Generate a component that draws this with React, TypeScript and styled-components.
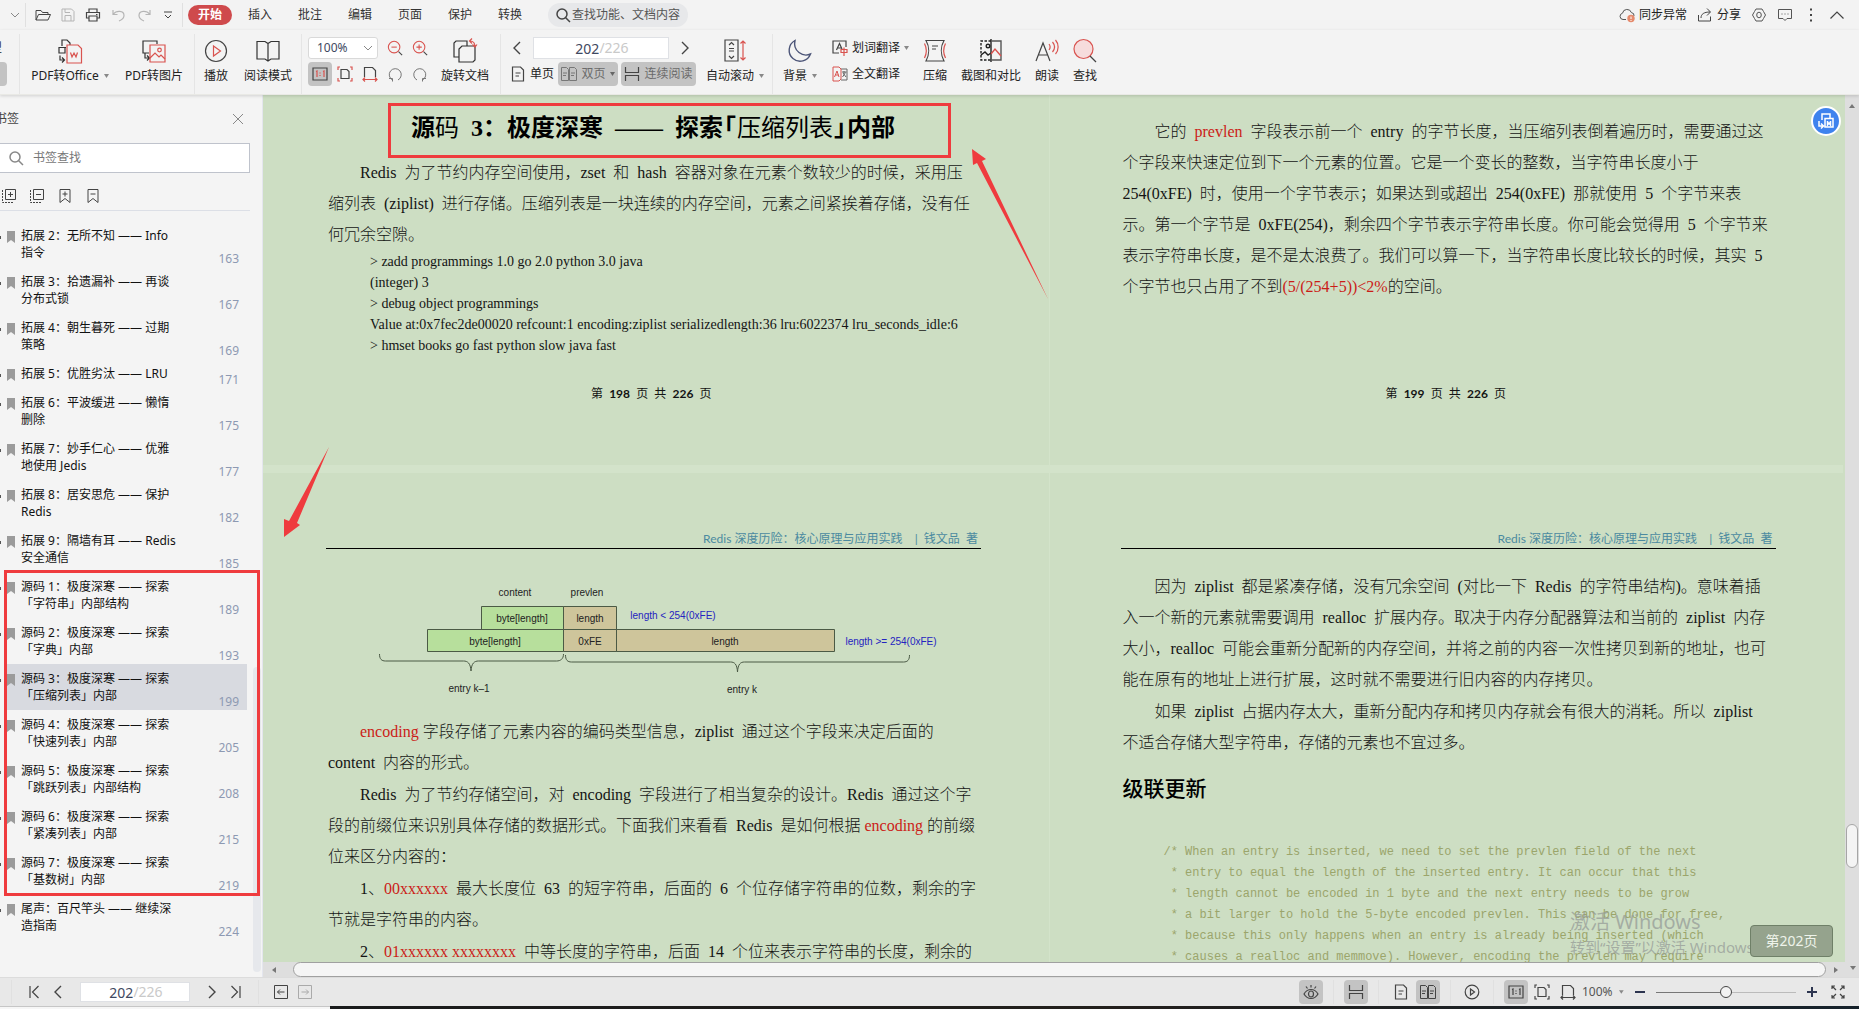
import React from "react";
import styled, { createGlobalStyle } from "styled-components";

const UI_FONT = '"Noto Sans", "Noto Sans CJK SC", sans-serif';
const HEAD_FONT = 'Lato, "Noto Sans CJK SC", sans-serif';
const DOC_FONT = '"Liberation Serif", "Noto Sans CJK SC", serif';
const PAPER = "#cddec3";
const RED = "#ef3b3e";
const ICON_RED = "#d9534f";

const Global = createGlobalStyle`
  * { box-sizing: border-box; }
  html, body { margin: 0; padding: 0; height: 100%; overflow: hidden; }
  body { font: 12px/16px ${UI_FONT}; color: #222; background: #f3f3f3; }
  button, input, select { font: inherit; color: inherit; }
  h1, h2, p, ul, figure, pre { margin: 0; padding: 0; }
`;

/* ---------- icons ---------- */

type IconProps = { size?: number; children: React.ReactNode; color?: string; w?: number };
const Icon = ({ size = 16, w = 1, color = "#444", children }: IconProps) => (
  <svg width={size} height={size} viewBox={`0 0 ${size} ${size}`} fill="none" stroke={color} strokeWidth={w} aria-hidden="true">
    {children}
  </svg>
);

const ChevronLeft = () => <Icon w={1.4}><path d="M11 2L5 8l6 6" /></Icon>;
const ChevronRight = () => <Icon w={1.4}><path d="M5 2l6 6-6 6" /></Icon>;
const ChevronDown = ({ color = "#888" }: { color?: string }) => (
  <Icon size={10} color={color}><path d="M1 3l4 4 4-4" /></Icon>
);
const Caret = ({ color = "#888" }: { color?: string }) => (
  <svg width="5" height="4" viewBox="0 0 5 4" aria-hidden="true"><path d="M0 0h5L2.5 4z" fill={color} /></svg>
);
const FolderIcon = () => <Icon><path d="M1 13V3.500h5l1.500 2H13V7.500M1 13l2.500-5.500H15.500L13 13z" /></Icon>;
const SaveIcon = () => <Icon color="#b5b5b5"><path d="M2 14V2h9.500L14 4.500V14zM5 2v3.500h5M5 14V8.500h6V14" /></Icon>;
const PrintIcon = () => (
  <Icon w={1.2}><path d="M4 5V2h8v3M4 11H1.500V5.500h13V11H12M4 9h8v5H4zM11 7.500h1.500" /></Icon>
);
const UndoIcon = () => <Icon color="#b5b5b5" w={1.2}><path d="M2 3v4.500h4.500M2.500 7C5 3.500 13 3 13 8.500c0 3-2.500 4.500-5 5.500" /></Icon>;
const RedoIcon = () => <Icon color="#b5b5b5" w={1.2}><path d="M14 3v4.500H9.500M13.500 7C11 3.500 3 3 3 8.500c0 3 2.500 4.500 5 5.500" /></Icon>;
const MoreDownIcon = () => <Icon size={10}><path d="M1 2h8M2 5l3 3 3-3" /></Icon>;
const SearchIcon = ({ color = "#444" }: { color?: string }) => (
  <Icon color={color} w={1.5}><circle cx="7" cy="7" r="5" /><path d="M10.500 10.500l4.500 4.500" /></Icon>
);
const CloudIcon = () => (
  <Icon color="#555"><path d="M7 12.500H4a3.200 3.200 0 01-.5-6.300A4.600 4.600 0 0112.400 5.600 3 3 0 0115 9" /><circle cx="12" cy="11.500" r="3.700" fill="#e58a6c" stroke="none" /><path d="M12 9.500v2.500M12 13v1" stroke="#fff" /></Icon>
);
const ShareIcon = () => <Icon><path d="M1.500 8v6h12V9.500M4 11c0-4 3-6 9-6M10 1.500L13.500 5 10 8.500" /></Icon>;
const HexIcon = () => (
  <Icon color="#555"><path d="M5 2h6l1.500 2.500L14.500 8l-2 3.500L11 14H5l-1.500-2.500L1.500 8l2-3.500z" /><ellipse cx="8" cy="8" rx="2.300" ry="2.800" /></Icon>
);
const CommentIcon = () => <Icon color="#555"><path d="M1.500 2.500h13v9H10l-2 2-2-2H1.500z" /><path d="M4.500 7h1M7.500 7h1M10.500 7h1" /></Icon>;
const DotsIcon = () => <Icon><path d="M7 2.500h2M7 8h2M7 13.500h2" strokeWidth="2" /></Icon>;
const CollapseIcon = () => <Icon w={1.2}><path d="M1.500 11.500L8 5l6.500 6.500" /></Icon>;
const CloseIcon = () => <Icon size={12} color="#888"><path d="M1 1l10 10M11 1L1 11" /></Icon>;

const PdfOfficeIcon = () => (
  <Icon size={26} color="#333" w={1.2}>
    <path d="M5 8V2h5l3 3v2M9 9.500H2v5.500h6V9.500M3 17.500V22h4.500M5 19.500L7.500 22 5 24.500" />
    <path d="M10 7h11l3.500 3.500V25H10z" stroke={ICON_RED} /><path d="M13.500 14.500l1.500 4.500 2-4 2 4 1.500-4.500" stroke={ICON_RED} />
  </Icon>
);
const PdfImageIcon = () => (
  <Icon size={26} color="#333" w={1.2}>
    <path d="M8 15H2V3h14v3M4 15v5h4M6 17.500L8.500 20 6 22.500" />
    <path d="M9 7h15v17H9z" stroke={ICON_RED} /><path d="M9 20l5-5 4 4 2-2 4 4" stroke={ICON_RED} /><circle cx="18.500" cy="12" r="1.800" stroke={ICON_RED} />
  </Icon>
);
const PlayIcon = () => (
  <Icon size={26} color="#444" w={1.2}><circle cx="13" cy="13" r="10.500" /><path d="M10.500 8l7 5-7 5z" stroke={ICON_RED} /></Icon>
);
const BookIcon = () => (
  <Icon size={26} color="#333" w={1.2}><path d="M2 3.500h8l3 2 3-2h8V21h-8l-3 2-3-2H2zM13 5.500V23" /></Icon>
);
const ZoomGlass = ({ plus }: { plus?: boolean }) => (
  <Icon size={18} color={ICON_RED} w={1.2}><circle cx="8" cy="8" r="6.500" /><path d={plus ? "M5 8h6M8 5v6" : "M5 8h6"} /><path d="M13 13l4 4" stroke="#444" /></Icon>
);
const OneToOneIcon = ({ color = "#444" }: { color?: string }) => (
  <Icon w={1.2}><path d="M1 2h14v12H1z" /><path d="M4 5.500l1-.5v6M11 5.500l1-.5v6M8 6.500v1M8 9v1" stroke={color} /></Icon>
);
const FitPageIcon = ({ color = "#444" }: { color?: string }) => (
  <Icon w={1.2}><path d="M4 3.500h6l2 2v7H4z" /><path d="M1 4V1h2M13 1h2v3M1 12v3h2M15 12v3h-2" stroke={color} /></Icon>
);
const FitWidthIcon = ({ color = "#444" }: { color?: string }) => (
  <Icon w={1.2}><path d="M2.500 11V1.500h8l3 3V11" /><path d="M1 13.500h14M3 11.500l-2 2 2 2M13 11.500l2 2-2 2" stroke={color} /></Icon>
);
const RotateLeftIcon = () => <Icon color="#777"><path d="M5.500 14A6 6 0 1111 14M2 12.500h3.500V15.500" /></Icon>;
const RotateRightIcon = () => <Icon color="#777"><path d="M10.500 14A6 6 0 105 14M14 12.500h-3.500V15.500" /></Icon>;
const RotateDocIcon = () => (
  <Icon size={26} color="#333" w={1.2}>
    <path d="M7 19H2V5l2-2h11v5" /><path d="M7 11l3-3h13v14l-2 2H7z" />
    <path d="M18 3c4 0 5 2 5 6M20 .5L17.500 3 20 5.500M20.500 6.500L23 9l2-2.500" stroke={ICON_RED} />
  </Icon>
);
const PageIcon = () => <Icon w={1.2}><path d="M2.500 1h8l3 3v11h-11zM5.500 7h5M5.500 10h3.500" /></Icon>;
const TwoPageIcon = ({ color = "#444" }: { color?: string }) => (
  <Icon color={color}><path d="M.5 1.500h5l2 2v11h-7zM8.500 1.500h5l2 2v11h-7zM2 7h4M2 9.500h3M10 7h4M10 9.500h3" /></Icon>
);
const ContinuousIcon = () => <Icon w={1.2}><path d="M1.500 1v5.500h13V1M1.500 15V9.500h13V15" /></Icon>;
const ScrollIcon = () => (
  <Icon size={26} color="#444" w={1.2}><path d="M3 2h13v21H3zM7 7l2.500-2.500L12 7M7 18l2.500 2.500L12 18M7 10.500h5M7 13h5" /><path d="M21 3v19M18.500 5.500L21 3l2.500 2.500M18.500 19.500L21 22l2.500-2.500" stroke={ICON_RED} /></Icon>
);
const MoonIcon = () => <Icon size={26} color="#4c5578" w={1.4}><path d="M8 2.500A11 11 0 1023.500 16C16 19.500 5.500 13 8 2.500z" /></Icon>;
const WordTranslateIcon = () => (
  <Icon w={1.2}><path d="M7 13H1V1h13v6M4.500 10L7.500 3.500 10 9M5.500 8h4" /><path d="M9 9.500h6v3H9zM12 7.500V16" stroke={ICON_RED} /></Icon>
);
const FullTranslateIcon = () => (
  <Icon><path d="M9 3h6v11H9M10 6h4.500M12 5v2M10.500 11l3-4.500M14 11l-3-4" stroke="#666" /><path d="M9 3L7 1H1v14h6l2-2zM2.500 11l2.500-6 2 6M3.500 9h3" stroke={ICON_RED} /></Icon>
);
const CompressIcon = () => (
  <Icon size={26} color="#444" w={1.2}><path d="M4 2.500h18c-3.500 6-3.500 14 0 20.500H4c3.500-6.500 3.500-14.500 0-20.500zM10 8h6M10 11h4" /><path d="M2.500 5.500c2.500 5 2.500 9.500 0 14.500M23.500 5.500c-2.500 5-2.500 9.500 0 14.500" stroke={ICON_RED} /></Icon>
);
const CompareIcon = () => (
  <Icon size={26} color="#222" w={1.4}><path d="M13 3H3v19h10" strokeDasharray="2.500 1.500" /><path d="M13 1v23" /><path d="M13 3h10v19H13" stroke="#555" /><path d="M3 17l4-3 3 3 3-2" /><path d="M13 16l4-5 6 7" stroke={ICON_RED} /><circle cx="10" cy="8" r="1.800" /></Icon>
);
const ReadAloudIcon = () => (
  <Icon size={26} color="#444" w={1.2}><path d="M2 23L9 5l7 18M4.500 17h9" /><path d="M15 6c1.500 2 1.500 4 0 6M18.500 4c2.500 3 2.500 7 0 10M21.500 2c3.500 4 3.500 10 0 14" stroke={ICON_RED} /></Icon>
);
const FindIcon = () => (
  <Icon size={26} color={ICON_RED} w={1.2}><circle cx="11.500" cy="11" r="9.500" fill="#f6dcdc" /><path d="M18 18l6 6" stroke="#444" /></Icon>
);
const ExpandAllIcon = ({ minus }: { minus?: boolean }) => (
  <Icon><path d="M4.500 1.500h10v10h-10zM7 6.500h5" />{!minus && <path d="M9.500 4v5" />}<path d="M1.500 2v12.500H13" strokeDasharray="2 1" /></Icon>
);
const BookmarkEditIcon = ({ minus }: { minus?: boolean }) => (
  <Icon><path d="M3 1.500h10v13l-5-4-5 4zM5.500 6h5" />{!minus && <path d="M8 3.500v5" />}</Icon>
);
const BookmarkIcon = () => (
  <svg width="8" height="12" viewBox="0 0 8 12" aria-hidden="true"><path d="M0 0h8v12L4 9l-4 3z" fill="#9b9b9b" /></svg>
);
const FirstIcon = () => <Icon w={1.2}><path d="M4 2v12M12.500 2l-6 6 6 6" /></Icon>;
const LastIcon = () => <Icon w={1.2}><path d="M12 2v12M3.500 2l6 6-6 6" /></Icon>;
const BoxArrowIcon = ({ right }: { right?: boolean }) => (
  <Icon color={right ? "#aaa" : "#444"}><path d="M1.500 1.500h13v13h-13z" /><path d={right ? "M4.500 8h7M9 5.500L11.500 8 9 10.500" : "M4.500 8h7M7 5.500L4.500 8 7 10.500"} /></Icon>
);
const EyeIcon = () => (
  <Icon size={18} w={1.2}><path d="M2 11c3.500-6 10.500-6 14 0-3.500 6-10.500 6-14 0z" /><ellipse cx="9" cy="11" rx="2.500" ry="3" /><path d="M9 2v2.500M4 3.500l1.500 2M14 3.500l-1.500 2" /></Icon>
);
const SmallPlayIcon = () => <Icon w={1.2}><circle cx="8" cy="8" r="6.800" /><path d="M6.500 5l4 3-4 3z" /></Icon>;
const FullscreenIcon = () => (
  <Icon w={1.2}><path d="M2 5V2h3M2 2l4 4M11 2h3v3M14 2l-4 4M2 11v3h3M2 14l4-4M14 11v3h-3M14 14l-4-4" /></Icon>
);
const FloatIcon = () => (
  <Icon size={18} color="#fff" w={1.5}><path d="M5 8V2h8v4M2 9v5h4M4 11.500L6.500 14 4 16.500M8 6.500h8V15H8z" /><path d="M10.500 9v4l1.500-2 1.500 2V9" /></Icon>
);

/* ---------- shell ---------- */

const Shell = styled.div`
  height: 100vh; display: flex; flex-direction: column; overflow: hidden; background: #f3f3f3;
`;
const Plain = styled.button`
  border: 0; background: none; padding: 0; display: flex; align-items: center; justify-content: center; cursor: pointer; white-space: nowrap;
`;
const IconButton = styled(Plain)<{ $w?: number }>`
  width: ${(p) => p.$w ?? 24}px; height: 24px; flex: none;
`;
const Rule = styled.span`
  width: 1px; height: 24px; background: #e0e0e0; flex: none;
`;

const MenuBar = styled.header`
  height: 30px; flex: none; display: flex; align-items: center;
`;
const Quick = styled.div`
  display: flex; align-items: center; width: 182px; padding-left: 4px; flex: none;
`;
const Tabs = styled.nav`
  display: flex; align-items: center; gap: 6px; padding-left: 5px;
`;
const Tab = styled(Plain)<{ $active?: boolean }>`
  width: 44px; height: 20px; border-radius: 10px;
  background: ${(p) => (p.$active ? "#cf4a4c" : "transparent")};
  color: ${(p) => (p.$active ? "#fff" : "#333")};
  font-weight: ${(p) => (p.$active ? 700 : 400)};
`;
const CommandSearch = styled.label`
  display: flex; align-items: center; width: 140px; height: 24px; margin-left: 16px; padding-left: 7px;
  border-radius: 12px; background: #e7e8ea;
  input { border: 0; background: none; outline: 0; padding: 0; width: 112px; margin-left: 1px; }
  input::placeholder { color: #555; opacity: 1; }
`;
const MenuRight = styled.div`
  display: flex; align-items: center; margin-left: auto; padding-right: 4px;
`;
const TextAction = styled(Plain)`
  gap: 4px; margin-right: 10px; color: #222;
`;

const Ribbon = styled.div`
  height: 65px; flex: none; display: flex; align-items: flex-start; padding-top: 4px;
  border-bottom: 1px solid #e9e9e5; box-shadow: 0 1px 3px rgba(0, 0, 0, 0.15); position: relative; z-index: 2; background: #f3f3f3;
`;
const Group = styled.div<{ $gap?: number; $pad?: number; $end?: number }>`
  display: flex; gap: ${(p) => p.$gap ?? 16}px; height: 60px; border-right: 1px solid #e5e5e5;
  padding: 0 ${(p) => p.$end ?? p.$pad ?? 10}px 0 ${(p) => p.$pad ?? 10}px;
  &:last-child { border-right: 0; }
`;
const Big = styled(Plain)<{ $w: number }>`
  width: ${(p) => p.$w}px; height: 54px; flex-direction: column; justify-content: flex-start; padding-top: 4px; gap: 4px; color: #222;
  span { display: flex; align-items: center; gap: 5px; height: 16px; }
`;
const Stack = styled.div`
  display: flex; flex-direction: column; gap: 2px; padding-top: 2px;
`;
const Line = styled.div<{ $gap?: number }>`
  display: flex; align-items: center; height: 24px; gap: ${(p) => p.$gap ?? 0}px;
`;
const Small = styled(Plain)<{ $w?: number; $on?: boolean; $dim?: boolean }>`
  ${(p) => (p.$w ? `width: ${p.$w}px;` : "")}
  height: 24px; gap: 4px; border-radius: 4px;
  background: ${(p) => (p.$on ? "#c3c3c3" : "transparent")};
  color: ${(p) => (p.$dim ? "#6b6b6b" : "#222")};
`;
const SelectBox = styled.label<{ $w: number; $plain?: boolean }>`
  position: relative; display: flex; align-items: center; justify-content: space-between; width: ${(p) => p.$w}px; height: 22px;
  padding: 0 ${(p) => (p.$plain ? 0 : 4)}px 0 ${(p) => (p.$plain ? 0 : 8)}px;
  border: ${(p) => (p.$plain ? 0 : "1px solid #d9d9d9")}; border-radius: 3px;
  background: ${(p) => (p.$plain ? "none" : "#fff")}; color: ${(p) => (p.$plain ? "#555" : "#3e4861")};
  select { appearance: none; border: 0; background: none; padding: 0; width: 40px; outline: 0; font-size: 12px; }
`;
const PageBox = styled.label<{ $w: number; $h: number }>`
  display: flex; align-items: center; justify-content: center; width: ${(p) => p.$w}px; height: ${(p) => p.$h}px;
  background: #fff; border: 1px solid #dfe1e5; font-size: 14px; color: #c9c9c9;
  input { width: 26px; border: 0; padding: 0; text-align: right; background: none; color: #3e4861; outline: 0; height: 18px; }
`;
const CutStub = styled.div`
  width: 20px; height: 60px; display: flex; flex-direction: column; gap: 2px; padding-top: 2px; border-right: 1px solid #e5e5e5; margin-right: 1px; overflow: hidden; flex: none;
  span { height: 24px; line-height: 24px; margin-left: -10px; }
  i { height: 24px; width: 7px; border-radius: 0 4px 4px 0; background: #c3c3c3; }
`;

/* ---------- sidebar ---------- */

const Middle = styled.div`
  flex: 1; min-height: 0; display: flex;
`;
const Side = styled.aside`
  width: 263px; flex: none; position: relative; border-right: 1px solid #e4e6ee; overflow: hidden; background: #f4f4f4;
`;
const SideHead = styled.div`
  display: flex; align-items: center; justify-content: space-between; height: 48px; padding-right: 18px; color: #444;
  span { margin-left: -5px; }
`;
const SideSearch = styled.label`
  display: flex; align-items: center; height: 30px; width: 251px; margin-left: -1px; padding-left: 8px; gap: 9px;
  background: #fff; border: 1px solid #bfc3cc;
  input { border: 0; outline: 0; padding: 0; background: none; width: 180px; }
  input::placeholder { color: #777; opacity: 1; }
`;
const SideTools = styled.div`
  display: flex; align-items: center; gap: 12px; height: 38px; width: 250px; padding: 8px 0 0 1px; border-bottom: 1px solid #dcdfe6;
`;
const SideTool = styled(Plain)`
  width: 16px; height: 16px;
`;
const List = styled.ul`
  list-style: none; padding-top: 10px;
`;
const Entry = styled.button<{ $on?: boolean }>`
  display: flex; width: 247px; border: 0; padding: 0 8px 0 0; background: ${(p) => (p.$on ? "linear-gradient(90deg, transparent 7px, #d8dae0 7px)" : "none")};
  text-align: left; line-height: 17px; color: #111; align-items: flex-start;
`;
const EntryDot = styled.i`
  width: 1px; height: 3px; background: #555; margin: 15px 6px 0 0;
`;
const EntryMark = styled.span`
  width: 14px; padding-top: 10px; display: flex;
`;
const EntryText = styled.span`
  flex: 1; white-space: pre; padding: 6px 0;
`;
const EntryPage = styled.span`
  align-self: flex-end; color: #8d99b2;
`;
const SideScroll = styled.div`
  position: absolute; right: 1px; top: 572px; bottom: 5px; width: 8px; border-radius: 4px; background: #e6e8ec;
`;
const SideMarker = styled.div`
  position: absolute; left: 4px; top: 475px; width: 256px; height: 326px; border: 3px solid ${RED}; pointer-events: none;
`;

/* ---------- document ---------- */

const View = styled.main`
  flex: 1; min-width: 0; display: grid; grid-template-columns: 1fr 14px; grid-template-rows: 1fr 15px; position: relative; background: #dedede;
`;
const Canvas = styled.div`
  overflow: hidden; position: relative; background: ${PAPER}; min-height: 0;
`;
const Spread = styled.div`
  display: grid; grid-template-columns: 1fr 1fr; grid-template-rows: 370px 520px; gap: 8px 1px; margin: 0 2px 0 -8px; background: #d3e3ca;
`;
const Paper = styled.article<{ $top: number }>`
  background: ${PAPER}; padding: ${(p) => p.$top}px 0 62px 71px; display: flex; flex-direction: column; min-width: 0; overflow: hidden;
  font-family: ${DOC_FONT}; color: #141414;
`;
const Title = styled.h1`
  position: relative; align-self: flex-start; font-size: 24px; line-height: 32px; margin: 0 0 13px 85px; white-space: pre; color: #000;
  span { font-weight: 400; }
  em { font-style: normal; font-feature-settings: "halt"; padding: 0 1px; }
`;
const TitleMarker = styled.div`
  position: absolute; left: -23px; top: -9px; width: 563px; height: 55px; border: 3px solid ${RED};
`;
const Para = styled.p`
  padding-left: 2px;
  & + & { margin-top: 1px; }
`;
const Row = styled.span`
  display: block; font-size: 16px; line-height: 31px; font-weight: 300; white-space: pre;
  &:first-child { padding-left: 32px; }
`;
const Mark = styled.b`
  font-weight: 400; color: #cb1c17;
`;
const Console = styled.pre`
  font: 14px/21px ${DOC_FONT}; padding-left: 44px; margin-top: 1px;
`;
const Comment = styled.pre`
  font: 12px/21px "Liberation Mono", monospace; padding-left: 43px; margin-top: 39px; color: #9ba56b;
`;
const Heading = styled.h2`
  font: 500 21px/32px "Noto Sans CJK SC", sans-serif; margin: 13px 0 0 2px; color: #000;
`;
const Running = styled.div<{ $after: number }>`
  width: 655px; margin-bottom: ${(p) => p.$after}px; padding-right: 3px; border-bottom: 1px solid #000; text-align: right; font: 12px/18px ${HEAD_FONT}; color: #4b8aa0; white-space: pre;
`;
const Footer = styled.footer`
  margin: auto 0 0 0; padding-right: 72px; text-align: center; font: 12px/18px ${HEAD_FONT}; white-space: pre;
`;
const Figure = styled.figure`
  height: 120px; margin: 0 0 16px 2px;
  text { font: 10px "Liberation Sans", Arial, sans-serif; text-anchor: middle; }
`;
const VScroll = styled.div`
  position: relative; display: flex; flex-direction: column; align-items: center; padding: 9px 0 0; background: #dedede;
`;
const VThumb = styled.div`
  position: absolute; top: 729px; left: 1px; right: 1px; height: 44px; border: 1px solid #a6a6a6; border-radius: 7px; background: #f4f4f4;
`;
const HScroll = styled.div`
  display: flex; align-items: center; padding: 0 7px 0 9px; gap: 8px;
`;
const HThumb = styled.div`
  flex: 1; height: 15px; border: 1px solid #a0a0a0; border-radius: 8px; background: #f5f5f5; margin-left: 9px;
`;
const FloatButton = styled(Plain)`
  position: absolute; right: 4px; top: 11px; width: 30px; height: 30px; border-radius: 50%; border: 2px solid #fff; background: #3f83ee;
`;
const Watermark = styled.div`
  position: absolute; right: 63px; bottom: 4px; width: 212px; color: rgba(150, 156, 152, 0.75); white-space: nowrap;
  font: 15px/22px ${UI_FONT};
  strong { display: block; font-weight: 400; font-size: 20px; line-height: 28px; }
`;
const PageTip = styled.div`
  position: absolute; right: 12px; bottom: 5px; width: 83px; height: 32px; border: 1px solid #6f8068; border-radius: 4px; background: #95a38d;
  color: #eef3ea; font: 14px/30px ${UI_FONT}; text-align: center;
`;
const Arrows = styled.svg`
  position: absolute; left: 0; top: 0; pointer-events: none;
`;

/* ---------- status bar ---------- */

const Status = styled.footer`
  height: 29px; flex: none; display: flex; align-items: center; background: #e8e8e8; border-top: 1px solid #dcdcdc;
`;
const StatusLeft = styled.div`
  display: flex; align-items: center; padding-left: 11px; gap: 10px;
`;
const StatusRight = styled.div`
  display: flex; align-items: center; margin-left: auto; padding-right: 11px; gap: 10px;
`;
const Range = styled.input`
  appearance: none; width: 140px; height: 14px; margin: 0; background: linear-gradient(#777, #777) left center / 50% 1px no-repeat, linear-gradient(#bbb, #bbb) center / 100% 1px no-repeat;
  &::-webkit-slider-thumb { appearance: none; width: 12px; height: 12px; border-radius: 50%; border: 1px solid #444; background: #f3f3f3; }
`;
const Sign = styled(Plain)`
  width: 12px; height: 20px;
`;
const Desktop = styled.div`
  height: 3px; flex: none; display: grid; grid-template-columns: 330px 1fr; background: linear-gradient(90deg, #16191c, #23201d 60%, #16222b);
  i { background: #f6f6f6; border-top: 1px solid #c6c6c6; }
`;

/* A paragraph with fixed line breaks; words between tildes are set in red. */
const Text = ({ lines }: { lines: string[] }) => (
  <Para>
    {lines.map((line) => (
      <Row key={line}>
        {line.split("~").map((part, i) => (i % 2 ? <Mark key={i}>{part}</Mark> : part))}
      </Row>
    ))}
  </Para>
);

const bookmarks: { text: string; page: number; on?: boolean }[] = [
  { text: "拓展 2：无所不知 —— Info\n指令", page: 163 },
  { text: "拓展 3：拾遗漏补 —— 再谈\n分布式锁", page: 167 },
  { text: "拓展 4：朝生暮死 —— 过期\n策略", page: 169 },
  { text: "拓展 5：优胜劣汰 —— LRU", page: 171 },
  { text: "拓展 6：平波缓进 —— 懒惰\n删除", page: 175 },
  { text: "拓展 7：妙手仁心 —— 优雅\n地使用 Jedis", page: 177 },
  { text: "拓展 8：居安思危 —— 保护\nRedis", page: 182 },
  { text: "拓展 9：隔墙有耳 —— Redis\n安全通信", page: 185 },
  { text: "源码 1：极度深寒 —— 探索\n「字符串」内部结构", page: 189 },
  { text: "源码 2：极度深寒 —— 探索\n「字典」内部", page: 193 },
  { text: "源码 3：极度深寒 —— 探索\n「压缩列表」内部", page: 199, on: true },
  { text: "源码 4：极度深寒 —— 探索\n「快速列表」内部", page: 205 },
  { text: "源码 5：极度深寒 —— 探索\n「跳跃列表」内部结构", page: 208 },
  { text: "源码 6：极度深寒 —— 探索\n「紧凑列表」内部", page: 215 },
  { text: "源码 7：极度深寒 —— 探索\n「基数树」内部", page: 219 },
  { text: "尾声：百尺竿头 —— 继续深\n造指南", page: 224 },
];

const tabs = ["开始", "插入", "批注", "编辑", "页面", "保护", "转换"];

const runningText = "Redis 深度历险：核心原理与应用实践    |  钱文品  著";

const ZiplistFigure = () => (
  <svg width="653" height="120" viewBox="0 0 653 120" fill="none" stroke="#4b5a45" role="img" aria-label="ziplist entry">
    <path d="M153.500 26.500h82v23h-82zM99.500 49.500h136v22h-136z" fill="#b7df9c" />
    <path d="M235.500 26.500h53v23h-53zM235.500 49.500h53v22h-53zM288.500 49.500h218v22h-218z" fill="#cec59b" />
    <path d="M51.500 74c0 5 2 7 6 7h78c4 0 7 2 7.500 10 .5-8 3.500-10 7.500-10h78c4 0 7-2 7-7M237.500 75c0 5 2 7 6 7h159c4 0 6.500 2 7 10 .5-8 3-10 7-10h159c4 0 6-2 6-7" />
    <g stroke="none" fill="#222">
      <text x="187" y="16">content</text>
      <text x="259" y="16">prevlen</text>
      <text x="194" y="42">byte[length]</text>
      <text x="262" y="42">length</text>
      <text x="167" y="65">byte[length]</text>
      <text x="262" y="65">0xFE</text>
      <text x="397" y="65">length</text>
      <text x="141" y="112">entry k–1</text>
      <text x="414" y="113">entry k</text>
    </g>
    <g stroke="none" fill="#2424c0">
      <text x="345" y="39">length &lt; 254(0xFE)</text>
      <text x="563" y="65">length &gt;= 254(0xFE)</text>
    </g>
  </svg>
);

export default function App() {
  return (
    <Shell>
      <Global />
      <MenuBar>
        <Quick>
          <IconButton $w={21} aria-label="菜单"><ChevronDown /></IconButton>
          <Rule />
          <IconButton $w={34} aria-label="打开"><FolderIcon /></IconButton>
          <IconButton $w={16} aria-label="保存"><SaveIcon /></IconButton>
          <IconButton $w={34} aria-label="打印"><PrintIcon /></IconButton>
          <IconButton $w={17} aria-label="撤销"><UndoIcon /></IconButton>
          <IconButton $w={34} aria-label="恢复"><RedoIcon /></IconButton>
          <IconButton $w={14} aria-label="更多"><MoreDownIcon /></IconButton>
        </Quick>
        <Rule />
        <Tabs>
          {tabs.map((t, i) => <Tab key={t} $active={i === 0}>{t}</Tab>)}
        </Tabs>
        <CommandSearch>
          <SearchIcon />
          <input aria-label="查找功能" placeholder="查找功能、文档内容" />
        </CommandSearch>
        <MenuRight>
          <TextAction><CloudIcon />同步异常</TextAction>
          <TextAction><ShareIcon />分享</TextAction>
          <IconButton $w={16} aria-label="设置"><HexIcon /></IconButton>
          <IconButton $w={36} aria-label="反馈"><CommentIcon /></IconButton>
          <IconButton $w={16} aria-label="更多选项"><DotsIcon /></IconButton>
          <IconButton $w={36} aria-label="收起"><CollapseIcon /></IconButton>
        </MenuRight>
      </MenuBar>

      <Ribbon>
        <CutStub aria-hidden="true"><span>型</span><i /></CutStub>
        <Group $gap={15}>
          <Big $w={78}><PdfOfficeIcon /><span>PDF转Office <Caret /></span></Big>
          <Big $w={60}><PdfImageIcon /><span>PDF转图片</span></Big>
        </Group>
        <Group $gap={16} $pad={9}>
          <Big $w={24}><PlayIcon /><span>播放</span></Big>
          <Big $w={48}><BookIcon /><span>阅读模式</span></Big>
        </Group>
        <Group $gap={8} $pad={6} $end={10}>
          <Stack>
            <Line $gap={9}>
              <SelectBox $w={70}>
                <select aria-label="缩放"><option>100%</option></select>
                <ChevronDown />
              </SelectBox>
              <IconButton $w={16} aria-label="缩小"><ZoomGlass /></IconButton>
              <IconButton $w={16} aria-label="放大"><ZoomGlass plus /></IconButton>
            </Line>
            <Line $gap={1}>
              <Small $w={24} $on aria-label="实际大小"><OneToOneIcon color={ICON_RED} /></Small>
              <Small $w={24} aria-label="适合页面"><FitPageIcon color={ICON_RED} /></Small>
              <Small $w={24} aria-label="适合宽度"><FitWidthIcon color={ICON_RED} /></Small>
              <Small $w={24} aria-label="向左旋转"><RotateLeftIcon /></Small>
              <Small $w={24} aria-label="向右旋转"><RotateRightIcon /></Small>
            </Line>
          </Stack>
          <Big $w={50}><RotateDocIcon /><span>旋转文档</span></Big>
        </Group>
        <Group $gap={10} $pad={8}>
          <Stack>
            <Line $gap={8}>
              <IconButton $w={16} aria-label="上一页"><ChevronLeft /></IconButton>
              <PageBox $w={136} $h={22}><input aria-label="页码" defaultValue="202" />/226</PageBox>
              <IconButton $w={16} aria-label="下一页"><ChevronRight /></IconButton>
            </Line>
            <Line $gap={3}>
              <Small $w={46}><PageIcon />单页</Small>
              <Small $w={60} $on $dim><TwoPageIcon color="#777" />双页<Caret color="#666" /></Small>
              <Small $w={75} $on $dim><ContinuousIcon />连续阅读</Small>
            </Line>
          </Stack>
          <Big $w={58}><ScrollIcon /><span>自动滚动 <Caret /></span></Big>
        </Group>
        <Group $gap={14} $pad={9}>
          <Big $w={36}><MoonIcon /><span>背景 <Caret /></span></Big>
          <Stack>
            <Line><Small><WordTranslateIcon />划词翻译<Caret /></Small></Line>
            <Line><Small><FullTranslateIcon />全文翻译</Small></Line>
          </Stack>
          <Big $w={24}><CompressIcon /><span>压缩</span></Big>
          <Big $w={60}><CompareIcon /><span>截图和对比</span></Big>
          <Big $w={24}><ReadAloudIcon /><span>朗读</span></Big>
          <Big $w={24}><FindIcon /><span>查找</span></Big>
        </Group>
      </Ribbon>

      <Middle>
        <Side>
          <SideHead>
            <span>书签</span>
            <Plain aria-label="关闭"><CloseIcon /></Plain>
          </SideHead>
          <SideSearch>
            <SearchIcon color="#888" />
            <input aria-label="书签查找" placeholder="书签查找" />
          </SideSearch>
          <SideTools>
            <SideTool aria-label="全部展开"><ExpandAllIcon /></SideTool>
            <SideTool aria-label="全部折叠"><ExpandAllIcon minus /></SideTool>
            <SideTool aria-label="添加书签"><BookmarkEditIcon /></SideTool>
            <SideTool aria-label="删除书签"><BookmarkEditIcon minus /></SideTool>
          </SideTools>
          <List>
            {bookmarks.map((b) => (
              <li key={b.page}>
                <Entry $on={b.on}>
                  <EntryDot />
                  <EntryMark><BookmarkIcon /></EntryMark>
                  <EntryText>{b.text}</EntryText>
                  <EntryPage>{b.page}</EntryPage>
                </Entry>
              </li>
            ))}
          </List>
          <SideScroll />
          <SideMarker />
        </Side>

        <View>
          <Canvas>
            <Spread>
              <Paper $top={17}>
                <Title>
                  源<span>码</span>{"  3："}极度深寒{"  ——  "}探索<em>「</em><span>压缩列表</span><em>」</em>内部
                  <TitleMarker />
                </Title>
                <Text
                  lines={[
                    "Redis  为了节约内存空间使用，zset  和  hash  容器对象在元素个数较少的时候，采用压",
                    "缩列表  (ziplist)  进行存储。压缩列表是一块连续的内存空间，元素之间紧挨着存储，没有任",
                    "何冗余空隙。",
                  ]}
                />
                <Console>{"> zadd programmings 1.0 go 2.0 python 3.0 java\n(integer) 3\n> debug object programmings\nValue at:0x7fec2de00020 refcount:1 encoding:ziplist serializedlength:36 lru:6022374 lru_seconds_idle:6\n> hmset books go fast python slow java fast"}</Console>
                <Footer>第  <b>198</b>  页  共  <b>226</b>  页</Footer>
              </Paper>
              <Paper $top={21}>
                <Text
                  lines={[
                    "它的  ~prevlen~  字段表示前一个  entry  的字节长度，当压缩列表倒着遍历时，需要通过这",
                    "个字段来快速定位到下一个元素的位置。它是一个变长的整数，当字符串长度小于",
                    "254(0xFE)  时，使用一个字节表示；如果达到或超出  254(0xFE)  那就使用  5  个字节来表",
                    "示。第一个字节是  0xFE(254)，剩余四个字节表示字符串长度。你可能会觉得用  5  个字节来",
                    "表示字符串长度，是不是太浪费了。我们可以算一下，当字符串长度比较长的时候，其实  5",
                    "个字节也只占用了不到~(5/(254+5))<2%~的空间。",
                  ]}
                />
                <Footer>第  <b>199</b>  页  共  <b>226</b>  页</Footer>
              </Paper>
              <Paper $top={57}>
                <Running $after={31}>{runningText}</Running>
                <Figure><ZiplistFigure /></Figure>
                <Text
                  lines={[
                    "~encoding~ 字段存储了元素内容的编码类型信息，ziplist  通过这个字段来决定后面的",
                    "content  内容的形式。",
                  ]}
                />
                <Text
                  lines={[
                    "Redis  为了节约存储空间，对  encoding  字段进行了相当复杂的设计。Redis  通过这个字",
                    "段的前缀位来识别具体存储的数据形式。下面我们来看看  Redis  是如何根据 ~encoding~ 的前缀",
                    "位来区分内容的：",
                  ]}
                />
                <Text
                  lines={[
                    "1、~00xxxxxx~  最大长度位  63  的短字符串，后面的  6  个位存储字符串的位数，剩余的字",
                    "节就是字符串的内容。",
                  ]}
                />
                <Text lines={["2、~01xxxxxx xxxxxxxx~  中等长度的字符串，后面  14  个位来表示字符串的长度，剩余的"]} />
              </Paper>
              <Paper $top={57}>
                <Running $after={22}>{runningText}</Running>
                <Text
                  lines={[
                    "因为  ziplist  都是紧凑存储，没有冗余空间  (对比一下  Redis  的字符串结构)。意味着插",
                    "入一个新的元素就需要调用  realloc  扩展内存。取决于内存分配器算法和当前的  ziplist  内存",
                    "大小，realloc  可能会重新分配新的内存空间，并将之前的内容一次性拷贝到新的地址，也可",
                    "能在原有的地址上进行扩展，这时就不需要进行旧内容的内存拷贝。",
                  ]}
                />
                <Text
                  lines={[
                    "如果  ziplist  占据内存太大，重新分配内存和拷贝内存就会有很大的消耗。所以  ziplist",
                    "不适合存储大型字符串，存储的元素也不宜过多。",
                  ]}
                />
                <Heading>级联更新</Heading>
                <Comment>{"/* When an entry is inserted, we need to set the prevlen field of the next\n * entry to equal the length of the inserted entry. It can occur that this\n * length cannot be encoded in 1 byte and the next entry needs to be grow\n * a bit larger to hold the 5-byte encoded prevlen. This can be done for free,\n * because this only happens when an entry is already being inserted (which\n * causes a realloc and memmove). However, encoding the prevlen may require"}</Comment>
              </Paper>
            </Spread>
            <Arrows width="800" height="460" viewBox="0 0 800 460" fill={RED} aria-hidden="true">
              <path d="M709 54l14 10-4 2 66 138-71-136-4 2z" />
              <path d="M21 442v-18l5 2 40-74-32 76 3 2z" />
            </Arrows>
            <Watermark><strong>激活 Windows</strong>转到“设置”以激活 Windows。</Watermark>
            <PageTip>第202页</PageTip>
            <FloatButton aria-label="转换文档"><FloatIcon /></FloatButton>
          </Canvas>
          <VScroll>
            <svg width="6" height="4" viewBox="0 0 6 4" aria-hidden="true"><path d="M0 4h6L3 0z" fill="#777" /></svg>
            <VThumb />
          </VScroll>
          <HScroll>
            <svg width="4" height="6" viewBox="0 0 4 6" aria-hidden="true"><path d="M4 0v6L0 3z" fill="#777" /></svg>
            <HThumb />
            <svg width="4" height="6" viewBox="0 0 4 6" aria-hidden="true"><path d="M0 0v6l4-3z" fill="#777" /></svg>
          </HScroll>
          <svg width="14" height="15" viewBox="0 0 14 15" aria-hidden="true"><path d="M5 4h6L8 8z" fill="#777" /></svg>
        </View>
      </Middle>

      <Status>
        <StatusLeft>
          <Rule />
          <Line>
            <IconButton aria-label="第一页"><FirstIcon /></IconButton>
            <IconButton aria-label="上一页"><ChevronLeft /></IconButton>
          </Line>
          <PageBox $w={110} $h={20}><input aria-label="当前页" defaultValue="202" />/226</PageBox>
          <Line>
            <IconButton aria-label="下一页"><ChevronRight /></IconButton>
            <IconButton aria-label="最后一页"><LastIcon /></IconButton>
          </Line>
          <Rule />
          <Line>
            <IconButton aria-label="后退"><BoxArrowIcon /></IconButton>
            <IconButton aria-label="前进"><BoxArrowIcon right /></IconButton>
          </Line>
        </StatusLeft>
        <StatusRight>
          <Small $w={24} $on aria-label="护眼"><EyeIcon /></Small>
          <Rule />
          <Small $w={24} $on aria-label="连续"><ContinuousIcon /></Small>
          <Rule />
          <Line $gap={3}>
            <Small $w={24} aria-label="单页"><PageIcon /></Small>
            <Small $w={24} $on aria-label="双页"><TwoPageIcon /></Small>
          </Line>
          <Rule />
          <Small $w={22} aria-label="放映"><SmallPlayIcon /></Small>
          <Rule />
          <Line $gap={2}>
            <Small $w={24} $on aria-label="实际大小"><OneToOneIcon /></Small>
            <Small $w={24} aria-label="适合页面"><FitPageIcon /></Small>
            <Small $w={24} aria-label="适合宽度"><FitWidthIcon /></Small>
            <SelectBox $w={42} $plain>
              <select aria-label="缩放比例"><option>100%</option></select>
              <Caret />
            </SelectBox>
          </Line>
          <Sign aria-label="缩小"><Icon size={12} w={2} color="#2d3550"><path d="M1 6h10" /></Icon></Sign>
          <Range type="range" aria-label="缩放滑块" defaultValue={50} />
          <Sign aria-label="放大"><Icon size={12} w={2} color="#2d3550"><path d="M1 6h10M6 1v10" /></Icon></Sign>
          <IconButton $w={20} aria-label="全屏"><FullscreenIcon /></IconButton>
        </StatusRight>
      </Status>
      <Desktop><i /></Desktop>
    </Shell>
  );
}
